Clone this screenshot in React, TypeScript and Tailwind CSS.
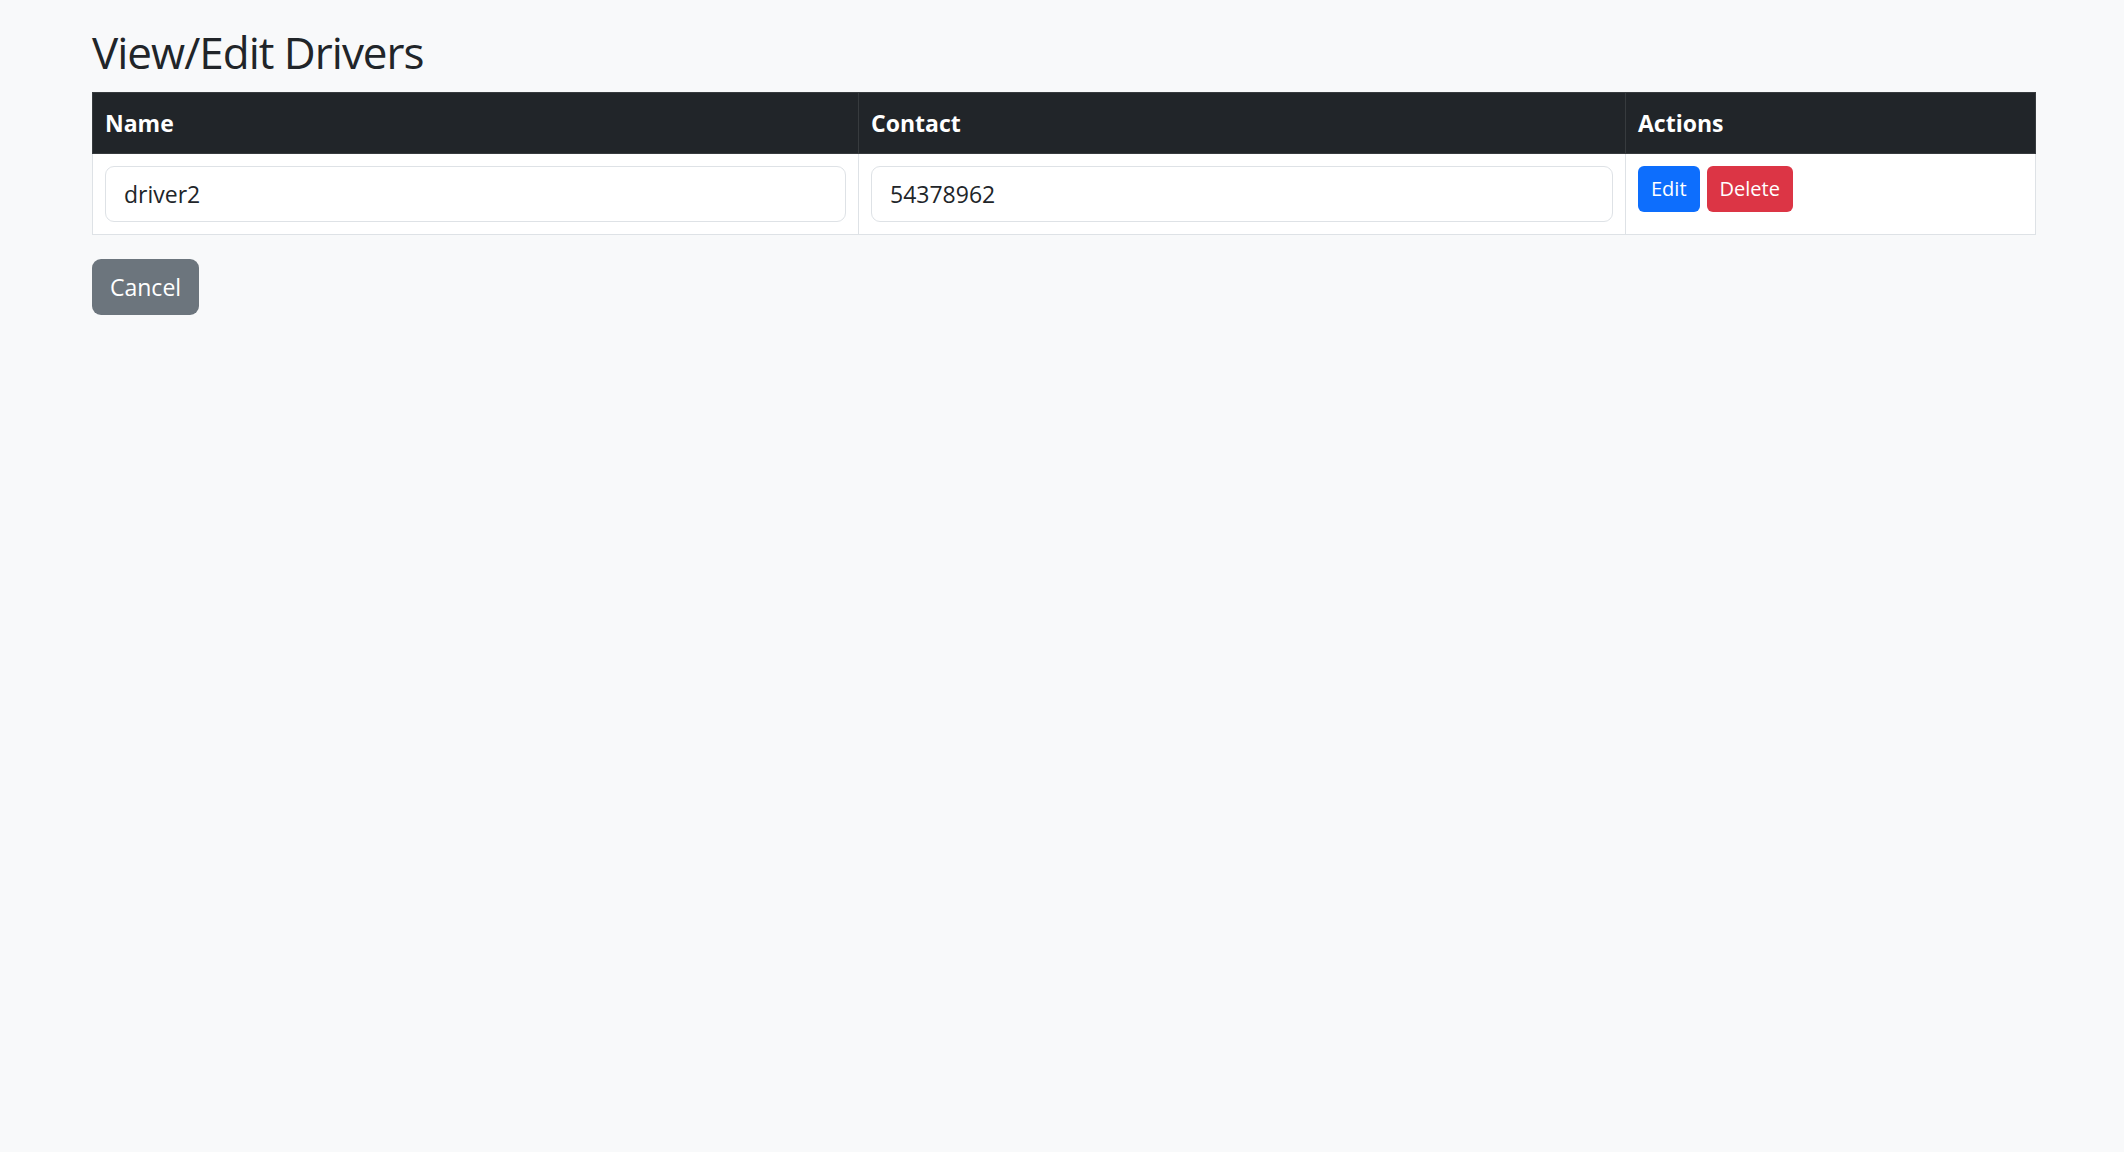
import { useState } from 'react';

type Driver = { id: number; name: string; contact: string };

const initialDrivers: Driver[] = [{ id: 2, name: 'driver2', contact: '54378962' }];

export default function App() {
  const [drivers, setDrivers] = useState<Driver[]>(initialDrivers);

  const update = (id: number, key: 'name' | 'contact', value: string) => {
    setDrivers(drivers.map((d) => (d.id === id ? { ...d, [key]: value } : d)));
  };

  return (
    <div
      className="min-h-screen bg-[#f8f9fa] text-[#212529] pl-[92px] pr-[88px] pt-[24px]"
      style={{ fontFamily: '"Segoe UI", "Open Sans", "Noto Sans", sans-serif' }}
    >
      <h2 className="text-[44px] font-medium tracking-[-1px] leading-[56px] mb-[12px]">View/Edit Drivers</h2>

      <table className="w-full border-collapse mb-[24px] text-[23px] leading-[36px]">
        <thead>
          <tr className="bg-[#212529] text-white">
            <th className="w-[766px] text-left font-bold px-[12px] py-[12px] border border-[#373b3e]">Name</th>
            <th className="w-[767px] text-left font-bold px-[12px] py-[12px] border border-[#373b3e]">Contact</th>
            <th className="text-left font-bold px-[12px] py-[12px] border border-[#373b3e]">Actions</th>
          </tr>
        </thead>
        <tbody>
          {drivers.map((d) => (
            <tr key={d.id} className="bg-white">
              <td className="p-[12px] border border-[#dee2e6] align-top">
                <input
                  value={d.name}
                  onChange={(e) => update(d.id, 'name', e.target.value)}
                  className="block w-full h-[56px] px-[18px] border border-[#dee2e6] rounded-[9px] bg-white text-[23px] text-[#212529] outline-none"
                />
              </td>
              <td className="p-[12px] border border-[#dee2e6] align-top">
                <input
                  value={d.contact}
                  onChange={(e) => update(d.id, 'contact', e.target.value)}
                  className="block w-full h-[56px] px-[18px] border border-[#dee2e6] rounded-[9px] bg-white text-[23px] text-[#212529] outline-none"
                />
              </td>
              <td className="p-[12px] border border-[#dee2e6] align-top">
                <div className="flex gap-[7px]">
                  <button className="h-[46px] px-[13px] rounded-[6px] bg-[#0d6efd] text-white text-[20px] leading-[32px]">
                    Edit
                  </button>
                  <button
                    onClick={() => setDrivers(drivers.filter((x) => x.id !== d.id))}
                    className="h-[46px] px-[13px] rounded-[6px] bg-[#dc3545] text-white text-[20px] leading-[32px]"
                  >
                    Delete
                  </button>
                </div>
              </td>
            </tr>
          ))}
        </tbody>
      </table>

      <button className="h-[56px] px-[18px] rounded-[9px] bg-[#6c757d] text-white text-[23px] leading-[36px]">
        Cancel
      </button>
    </div>
  );
}
